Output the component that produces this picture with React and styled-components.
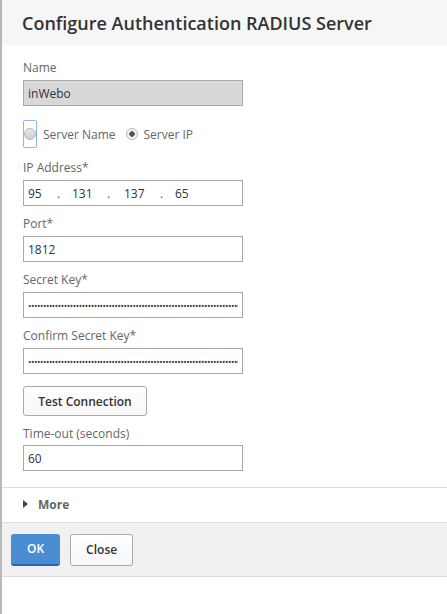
import React from 'react';
import styled, { createGlobalStyle } from 'styled-components';

const GlobalStyle = createGlobalStyle`
  html, body {
    margin: 0;
    padding: 0;
    background: #fff;
  }
  body {
    font-family: 'Open Sans', 'Noto Sans', sans-serif;
    color: #333;
  }
`;

const Dialog = styled.div`
  width: 447px;
  height: 614px;
  box-sizing: border-box;
  border-left: 2px solid #b8b8b8;
  background: #fff;
  display: flex;
  flex-direction: column;
`;

const Header = styled.div`
  height: 45px;
  background: #f6f6f6;
  display: flex;
  align-items: center;
  padding-left: 20px;
`;

const Title = styled.h1`
  margin: 0;
  font-size: 18px;
  font-weight: 600;
  color: #333;
`;

const Body = styled.div`
  padding: 15px 0 16px 21px;
  display: flex;
  flex-direction: column;
`;

const Field = styled.div`
  display: flex;
  flex-direction: column;
  margin-top: ${({ $gap }) => $gap ?? 10}px;
`;

const Label = styled.label`
  font-size: 12px;
  line-height: 16px;
  color: #666;
  margin-bottom: ${({ $tight }) => ($tight ? 3 : 4)}px;
`;

const Box = styled.div`
  width: 220px;
  height: 26px;
  box-sizing: border-box;
  border: 1px solid #a8a8a8;
  background: ${({ $disabled }) => ($disabled ? '#d8d8d8' : '#fff')};
  display: flex;
  align-items: center;
  padding: 0 4px;
  font-size: 12px;
  color: #333;
  overflow: hidden;
  white-space: nowrap;
`;

const Octet = styled.span`
  display: inline-block;
  width: ${({ $w }) => $w}px;
`;

const Dot = styled.span`
  display: inline-block;
  width: ${({ $w }) => $w}px;
  color: #555;
`;

// masked value, clipped by the field like a real password input
const Secret = styled.span`
  display: block;
  width: 100%;
  overflow: hidden;
  font-size: 9px;
  letter-spacing: -0.4px;
  color: #333;
`;

const RadioRow = styled.div`
  display: flex;
  align-items: center;
  margin-top: 14px;
  height: 28px;
`;

const FocusRing = styled.span`
  width: 14px;
  height: 28px;
  box-sizing: border-box;
  border: 1px solid #8fb4ef;
  border-radius: 2px;
  display: flex;
  align-items: center;
  justify-content: center;
  margin-right: 6px;
`;

const Radio = styled.span`
  width: 12px;
  height: 12px;
  box-sizing: border-box;
  border-radius: 50%;
  border: 1px solid #b5b5b5;
  background: ${({ $checked }) =>
    $checked
      ? 'radial-gradient(circle, #555 0 2.5px, #f2f2f2 3px)'
      : 'linear-gradient(#e8e8e8, #cfcfcf)'};
  flex: none;
`;

const RadioText = styled.span`
  font-size: 12px;
  color: #666;
  margin-left: ${({ $indent }) => $indent ?? 0}px;
  margin-right: ${({ $after }) => $after ?? 0}px;
`;

const Button = styled.button`
  font-family: inherit;
  font-size: 12px;
  font-weight: 600;
  color: #333;
  background: linear-gradient(#fff, #f7f7f7);
  border: 1px solid #aaa;
  border-radius: 3px;
  height: ${({ $h }) => $h ?? 30}px;
  padding: 0 ${({ $px }) => $px ?? 14}px;
  cursor: pointer;
`;

const PrimaryButton = styled(Button)`
  color: #fff;
  background: #4a8dd2;
  border: none;
  border-bottom: 2px solid #2867ad;
`;

const TestButton = styled(Button)`
  margin-top: 12px;
  width: 124px;
  align-self: flex-start;
`;

const MoreRow = styled.div`
  border-top: 1px solid #ddd;
  border-bottom: 1px solid #ddd;
  height: 36px;
  box-sizing: border-box;
  display: flex;
  align-items: center;
  padding: 0 0 2px 21px;
  gap: 10px;
`;

const Caret = styled.span`
  width: 0;
  height: 0;
  border-top: 4px solid transparent;
  border-bottom: 4px solid transparent;
  border-left: 5px solid #444;
`;

const MoreText = styled.span`
  font-size: 12px;
  font-weight: 700;
  color: #666;
`;

const Footer = styled.div`
  background: #f1f1f1;
  height: 54px;
  box-sizing: border-box;
  border-bottom: 1px solid #ddd;
  display: flex;
  align-items: center;
  padding-left: 9px;
  gap: 10px;
`;

const passwordDots = '•'.repeat(90);

export default function App() {
  return (
    <>
      <GlobalStyle />
      <Dialog>
        <Header>
          <Title>Configure Authentication RADIUS Server</Title>
        </Header>
        <Body>
          <Field $gap={0}>
            <Label>Name</Label>
            <Box $disabled>inWebo</Box>
          </Field>

          <RadioRow>
            <FocusRing>
              <Radio />
            </FocusRing>
            <RadioText $after={10}>Server Name</RadioText>
            <Radio $checked />
            <RadioText $indent={6}>Server IP</RadioText>
          </RadioRow>

          <Field $gap={12}>
            <Label>IP Address*</Label>
            <Box>
              <Octet $w={29}>95</Octet>
              <Dot $w={15}>.</Dot>
              <Octet $w={35}>131</Octet>
              <Dot $w={17}>.</Dot>
              <Octet $w={36}>137</Octet>
              <Dot $w={15}>.</Dot>
              <Octet $w={20}>65</Octet>
            </Box>
          </Field>

          <Field>
            <Label>Port*</Label>
            <Box>1812</Box>
          </Field>

          <Field>
            <Label>Secret Key*</Label>
            <Box>
              <Secret>{passwordDots}</Secret>
            </Box>
          </Field>

          <Field>
            <Label>Confirm Secret Key*</Label>
            <Box>
              <Secret>{passwordDots}</Secret>
            </Box>
          </Field>

          <TestButton>Test Connection</TestButton>

          <Field>
            <Label $tight>Time-out (seconds)</Label>
            <Box>60</Box>
          </Field>
        </Body>

        <MoreRow>
          <Caret />
          <MoreText>More</MoreText>
        </MoreRow>

        <Footer>
          <PrimaryButton $h={32} $px={16}>OK</PrimaryButton>
          <Button $h={32} $px={15}>Close</Button>
        </Footer>
      </Dialog>
    </>
  );
}
